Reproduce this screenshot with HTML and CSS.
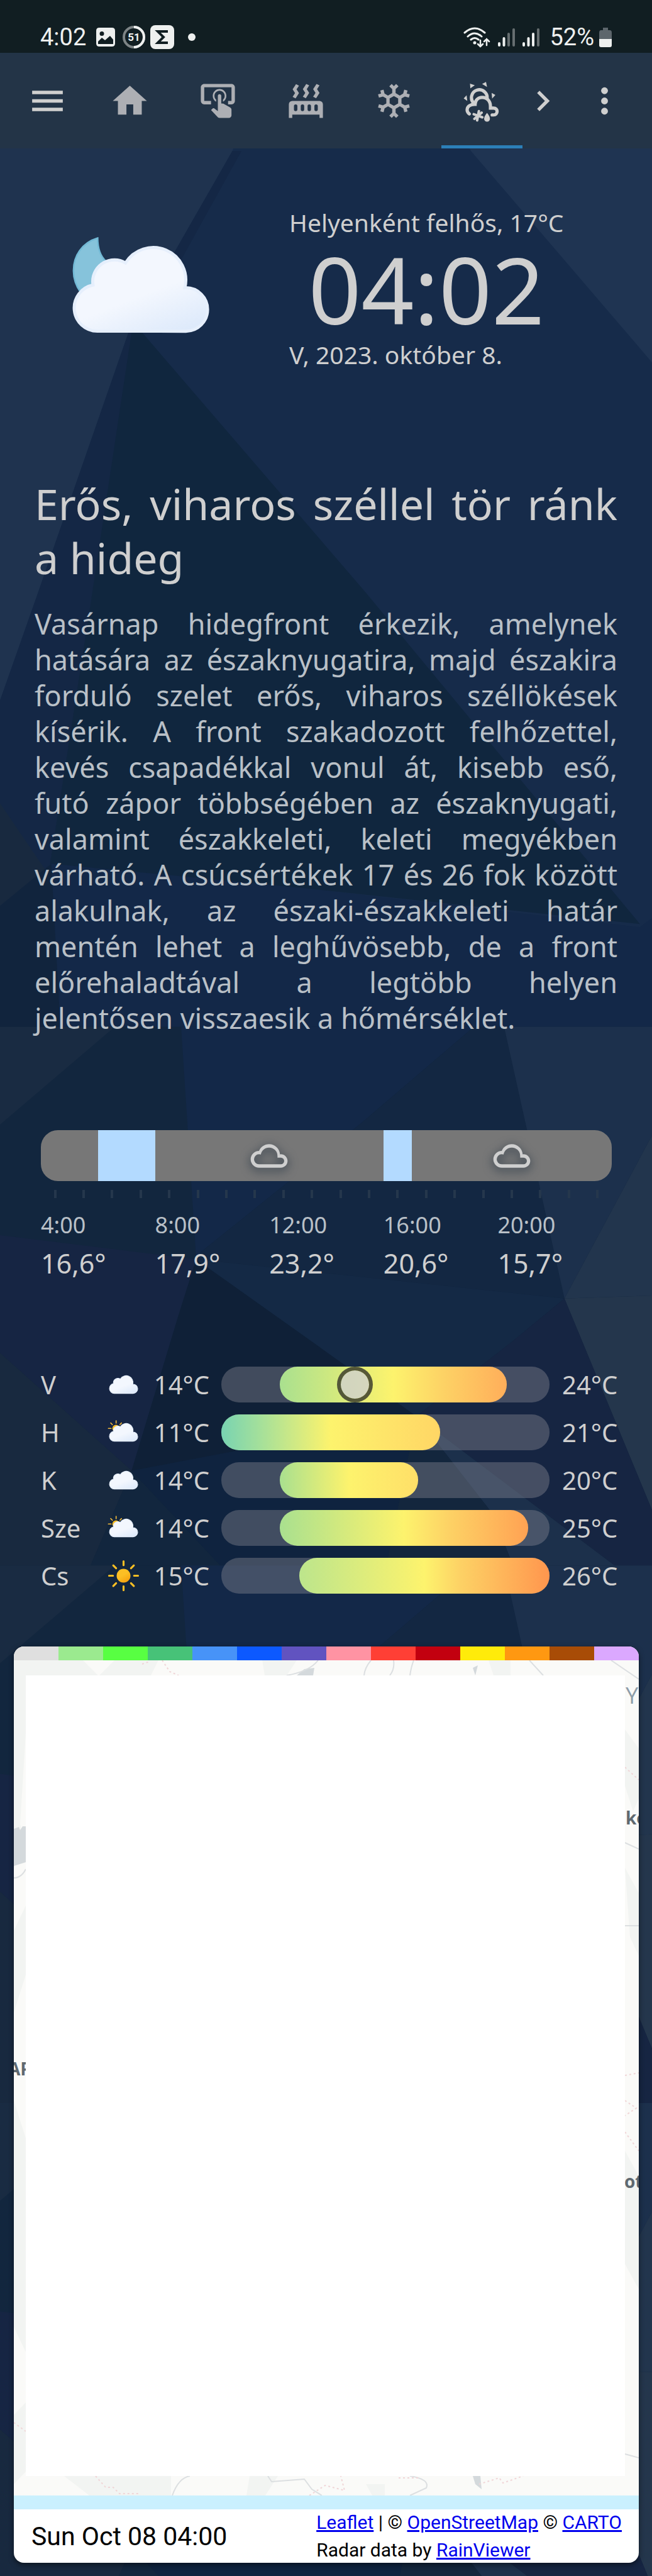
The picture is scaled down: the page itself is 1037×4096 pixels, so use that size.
FILE: index.html
```html
<!DOCTYPE html>
<html lang="hu">
<head>
<meta charset="utf-8">
<meta name="viewport" content="width=device-width, initial-scale=1">
<title>Időjárás</title>
<link rel="stylesheet" href="styles.css">
</head>
<body>
<svg class="backdrop" viewBox="0 0 1080 4265" preserveAspectRatio="none" aria-hidden="true">
  <defs>
    <g id="facets">
      <path fill="#12263e" d="M0 0H1080V892H0Z"/>
      <path fill="#192b42" d="M0 0H190L0 162Z"/>
      <path fill="#132848" d="M300 0H785L598 160L333 373L325 385L317 260Z"/>
      <path fill="#132742" d="M785 0H835L935 450L325 385L333 373L598 160Z"/>
      <path fill="#1c304c" d="M835 0H1080V180L935 450Z"/>
      <path fill="#22354d" d="M1080 180V445L935 450Z"/>
      <path fill="#24364c" d="M935 450L1080 445V800Z"/>
      <path fill="#162543" d="M0 345L325 385L295 480L218 735L0 540Z"/>
      <path fill="#18293f" d="M0 540L218 735L150 892H0Z"/>
      <path fill="#12263e" d="M218 735L365 892H150Z"/>
      <path fill="#0f233f" d="M218 735L690 645L640 892H365Z"/>
      <path fill="#0f2037" d="M325 385L515 520L690 645L218 735L295 480Z"/>
      <path fill="#142945" d="M325 385L935 450L850 520L690 645L515 520Z"/>
      <path fill="#162542" d="M935 450L1080 800V892H1018L690 645L850 520Z"/>
      <path fill="#1c304b" d="M690 645L1018 892H850L815 805Z"/>
      <path fill="#13263d" d="M690 645L815 805L850 892H640Z"/>
    </g>
  </defs>
  <path fill="#162b4a" d="M0 0H1080V1700H0Z"/>
  <path fill="#1f334f" d="M0 0H480L385 250L213 550L60 990L0 1160Z"/>
  <path fill="#142745" d="M385 250H400L300 430L220 550L150 1000L83 1430L75 1440L0 1330V1160L60 990L213 550Z"/>
  <path fill="#1f3452" d="M640 0H1080V600L780 250Z"/>
  <path fill="#132848" d="M83 1430L500 1470L1060 1535L1080 1520V1700H83Z"/>
  <path fill="#10263e" d="M218 550L235 550L605 980L1060 1530L500 1470L83 1430L150 1000Z"/>
  <path fill="#18293f" d="M0 1330L75 1440L0 1500Z"/>
  <path fill="#11243d" d="M0 1500L85 1430L100 1700H0Z"/>
  <use href="#facets" y="1700"/>
  <use href="#facets" y="2592"/>
  <use href="#facets" y="3482"/>
</svg>

<svg class="defs" aria-hidden="true">
  <defs>
    <linearGradient id="cloud-fill" x1="0.3" y1="0.2" x2="0.8" y2="1">
      <stop offset="0.45" stop-color="#f3f7fe"/><stop offset="1" stop-color="#deeafb"/>
    </linearGradient>
    <linearGradient id="sun-fill" x1="0.2" y1="0" x2="0.8" y2="1">
      <stop offset="0.45" stop-color="#fbbf24"/><stop offset="1" stop-color="#f59e0b"/>
    </linearGradient>
    <path id="cloud" fill="url(#cloud-fill)" stroke="#e6effc" stroke-width="1" d="M46.5 31.5h-.32a10.49 10.49 0 0 0-19.11-8 7 7 0 0 0-10.57 6 7.21 7.21 0 0 0 .1 1.14A7.5 7.5 0 0 0 18 45.5h28.500a7 7 0 0 0 0-14z"/>
    <symbol id="cloudy" viewBox="0 0 64 64"><use href="#cloud"/></symbol>
    <symbol id="partly" viewBox="0 0 64 64">
      <circle cx="20.500" cy="26" r="5.500" fill="url(#sun-fill)"/>
      <path stroke="#f2b93b" stroke-width="1.600" stroke-linecap="round" d="M20.700 14.500V18M9 26H13M12.500 17.800L15 20.300M28.800 17.800L26.500 20.300"/>
      <use href="#cloud"/>
    </symbol>
    <symbol id="sunny" viewBox="0 0 64 64">
      <circle cx="32" cy="32" r="10.500" fill="url(#sun-fill)"/>
      <path stroke="#fbbf24" stroke-width="3" stroke-linecap="round" d="M32 10V16M32 48V54M10 32H16M48 32H54M16.400 16.400L20.700 20.700M43.300 43.300L47.600 47.600M16.400 47.600L20.700 43.300M43.300 20.700L47.600 16.400"/>
    </symbol>
    <symbol id="cloud-line" viewBox="0 0 24 24">
      <path fill="#cfcfcf" d="M6,19A5,5 0 0,1 1,14A5,5 0 0,1 6,9C7,6.65 9.3,5 12,5C15.43,5 18.24,7.66 18.5,11.03L19,11A4,4 0 0,1 23,15A4,4 0 0,1 19,19H6M19,13H17V12A5,5 0 0,0 12,7C9.5,7 7.45,8.82 7.06,11.19C6.73,11.07 6.37,11 6,11A3,3 0 0,0 3,14A3,3 0 0,0 6,17H19A2,2 0 0,0 21,15A2,2 0 0,0 19,13Z"/>
    </symbol>
  </defs>
</svg>

<div class="status">
  <span class="status-text">4:02</span>
  <svg class="s-photo" width="30" height="30" viewBox="0 0 30 30" aria-hidden="true"><path fill="#eef0ef" fill-rule="evenodd" d="M5 0H25Q30 0 30 5V25Q30 30 25 30H5Q0 30 0 25V5Q0 0 5 0ZM9 6A3.500 3.500 0 1 0 9 13A3.500 3.500 0 1 0 9 6ZM3 22V26H27V19L22 13L14 20L9 16Z"/></svg>
  <svg class="s-ring" width="36" height="36" viewBox="0 0 36 36" aria-hidden="true"><circle cx="18" cy="18" r="16" fill="none" stroke="#7d8486" stroke-width="4"/><path d="M18 2A16 16 0 0 1 18 34" fill="none" stroke="#eef0ef" stroke-width="4"/><text x="18" y="24" text-anchor="middle" class="ring-text">51</text></svg>
  <svg class="s-sigma" width="38" height="38" viewBox="0 0 38 38" aria-hidden="true"><rect width="38" height="38" rx="8" fill="#eef0ef"/><path d="M28 10H12L21 19L12 28H28" fill="none" stroke="#111e22" stroke-width="4"/></svg>
  <i class="s-dot"></i>
  <div class="status-right">
    <svg width="43" height="33" viewBox="0 0 43 33" aria-hidden="true"><g fill="none" stroke="#eef0ef" stroke-width="3" stroke-linecap="round"><path d="M2 9Q18 -5 34 9M7 15Q18 5 29 15M12 20Q18 15 24 20"/><path stroke-width="2.500" d="M27 21V31M23 27L27 31L31 27M37 29V19M33 23L37 19L41 23"/></g><circle cx="18" cy="25" r="2.500" fill="#eef0ef"/></svg>
    <svg width="27" height="29" viewBox="0 0 27 29" aria-hidden="true"><g stroke="#eef0ef" stroke-width="4" stroke-linecap="round"><path d="M2 24V27M9.500 16V27"/><path stroke="#666e70" d="M17 9V27M25 2V27"/></g></svg>
    <svg width="27" height="29" viewBox="0 0 27 29" aria-hidden="true"><g stroke="#eef0ef" stroke-width="4" stroke-linecap="round"><path d="M2 24V27M9.500 16V27M17 9V27"/><path stroke="#666e70" d="M25 2V27"/></g></svg>
    <span class="status-text">52%</span>
    <svg width="20" height="31" viewBox="0 0 20 31" aria-hidden="true"><path fill="#5d666c" d="M6 0H14V4H17Q20 4 20 8V19H0V8Q0 4 3 4H6Z"/><path fill="#eef0ef" d="M0 18H20V28Q20 31 17 31H3Q0 31 0 28Z"/></svg>
  </div>
</div>

<header class="bar">
  <button class="icon-btn menu" aria-label="Menü"><svg class="icon" viewBox="0 0 24 24"><path d="M3,6H21V8H3V6M3,11H21V13H3V11M3,16H21V18H3V16Z"/></svg></button>
  <nav class="tabs">
    <a class="tab" href="#home" aria-label="Otthon"><svg class="icon" viewBox="0 0 24 24"><path d="M10,20V14H14V20H19V12H22L12,3L2,12H5V20H10Z"/></svg></a>
    <a class="tab" href="#switches" aria-label="Kapcsolók"><svg class="icon" viewBox="0 0 24 24"><path d="M13 5C15.21 5 17 6.79 17 9C17 10.5 16.2 11.77 15 12.46V11.24C15.61 10.69 16 9.89 16 9C16 7.34 14.66 6 13 6S10 7.34 10 9C10 9.89 10.39 10.69 11 11.24V12.46C9.8 11.77 9 10.5 9 9C9 6.79 10.79 5 13 5M20 20.5C19.97 21.32 19.32 21.97 18.5 22H13C12.62 22 12.26 21.85 12 21.57L8 17.37L8.74 16.6C8.93 16.39 9.2 16.28 9.5 16.28H9.7L12 18V9C12 8.45 12.45 8 13 8S14 8.45 14 9V13.47L15.21 13.6L19.15 15.79C19.68 16.03 20 16.56 20 17.14V20.5M20 2H4C2.9 2 2 2.9 2 4V12C2 13.11 2.9 14 4 14H8V12L4 12L4 4H20L20 12H18V14H20V13.96L20.04 14C21.13 14 22 13.09 22 12V4C22 2.9 21.11 2 20 2Z"/></svg></a>
    <a class="tab" href="#heating" aria-label="Fűtés"><svg class="icon" viewBox="0 0 24 24"><path fill-rule="evenodd" d="M7.95,3L6.53,5.19L7.95,7.4L5.95,10.5L4.22,9.6L5.64,7.39L4.22,5.19L6.22,2.09L7.95,3M13.95,2.89L12.53,5.1L13.95,7.3L11.95,10.4L10.22,9.5L11.64,7.3L10.22,5.1L12.22,2L13.95,2.89M20,2.89L18.56,5.1L20,7.3L18,10.4L16.25,9.5L17.67,7.3L16.25,5.1L18.25,2L20,2.89M2,22V14A2,2 0 0,1 4,12H20A2,2 0 0,1 22,14V22H20V20H4V22H2M6,14A1,1 0 0,0 5,15V17A1,1 0 0,0 7,17V15A1,1 0 0,0 6,14M10,14A1,1 0 0,0 9,15V17A1,1 0 0,0 11,17V15A1,1 0 0,0 10,14M14,14A1,1 0 0,0 13,15V17A1,1 0 0,0 15,17V15A1,1 0 0,0 14,14M18,14A1,1 0 0,0 17,15V17A1,1 0 0,0 19,17V15A1,1 0 0,0 18,14Z"/></svg></a>
    <a class="tab" href="#cooling" aria-label="Hűtés"><svg class="icon" viewBox="0 0 24 24"><path d="M20.79,13.95L18.46,14.57L16.46,13.44V10.56L18.46,9.43L20.79,10.05L21.31,8.12L19.54,7.65L20,5.88L18.07,5.36L17.45,7.69L15.45,8.82L13,7.38V5.12L14.71,3.41L13.29,2L12,3.29L10.71,2L9.29,3.41L11,5.12V7.38L8.5,8.82L6.5,7.69L5.92,5.36L4,5.88L4.47,7.65L2.7,8.12L3.22,10.05L5.55,9.43L7.55,10.56V13.45L5.55,14.58L3.22,13.96L2.7,15.89L4.47,16.36L4,18.12L5.93,18.64L6.55,16.31L8.55,15.18L11,16.62V18.88L9.29,20.59L10.71,22L12,20.71L13.29,22L14.7,20.59L13,18.88V16.62L15.5,15.17L17.5,16.3L18.12,18.63L20,18.12L19.53,16.35L21.3,15.88L20.79,13.95M9.5,10.56L12,9.11L14.5,10.56V13.44L12,14.89L9.5,13.44V10.56Z"/></svg></a>
    <a class="tab active" href="#weather" aria-label="Időjárás" aria-current="page"><svg class="icon" viewBox="0 0 24 24"><path d="M5 1.800L7.800 2.800L5.200 4.600ZM12.100 2L14.400 .8L15 3.800ZM17.700 7.300L19.900 8.500L18 10.600ZM3 8.700L1.300 10.500L3.400 12ZM15 19Q16.700 21 16.700 22.500A1.700 1.700 0 0 1 13.300 22.500Q13.300 21 15 19Z"/><g fill="none" stroke="currentColor" stroke-width="1.900"><path d="M7.300 13.400A4.600 4.600 0 1 1 15 10.800"/><path stroke-linecap="round" d="M4.600 19.600C3.700 19 3.300 18.200 3.300 17.300C3.300 15.100 5.200 13.900 8 14C8 11.500 9.800 9.900 12.200 9.900C14.900 9.900 17 12 17 15V16.200H18.800C20.200 16.200 20.900 17 20.900 18.100C20.900 19.500 20 20.200 19 20.200H18"/><path stroke-width="1.500" stroke-linecap="round" d="M10.200 18L9.200 23.400M7.200 19.800L12.200 21.600M11.800 18.900L7.600 22.500"/></g></svg></a>
  </nav>
  <button class="icon-btn next" aria-label="Tovább"><svg class="icon" viewBox="0 0 24 24"><path d="M8.59,16.58L13.17,12L8.59,7.41L10,6L16,12L10,18L8.59,16.58Z"/></svg></button>
  <button class="icon-btn more" aria-label="Továbbiak"><svg class="icon" viewBox="0 0 24 24"><circle cx="12" cy="6" r="2"/><circle cx="12" cy="12" r="2"/><circle cx="12" cy="18" r="2"/></svg></button>
</header>

<main>
  <section class="now">
    <svg class="now-icon" viewBox="0 0 64 64" aria-hidden="true">
      <path fill="#86c3db" stroke="#72b9d5" stroke-width="0.500" d="M18.100 15.500C13 17 10.300 21.300 10.300 26C10.300 28.800 11.200 31 12.600 33L24 32L20.800 23C18.900 21.300 18.100 18.500 18.100 15.500Z"/>
      <use href="#cloud"/>
    </svg>
    <div class="now-text">
      <p class="cond">Helyenként felhős, 17°C</p>
      <time class="clock">04:02</time>
      <p class="cond">V, 2023. október 8.</p>
    </div>
  </section>

  <article class="report">
    <h1>Erős, viharos széllel tör ránk a hideg</h1>
    <p>Vasárnap hidegfront érkezik, amelynek hatására az északnyugatira, majd északira forduló szelet erős, viharos széllökések kísérik. A front szakadozott felhőzettel, kevés csapadékkal vonul át, kisebb eső, futó zápor többségében az északnyugati, valamint északkeleti, keleti megyékben várható. A csúcsértékek 17 és 26 fok között alakulnak, az északi-északkeleti határ mentén lehet a leghűvösebb, de a front előrehaladtával a legtöbb helyen jelentősen&nbsp;visszaesik a hőmérséklet.</p>
  </article>

  <section class="hourly">
    <div class="hour-bar">
      <span class="seg gray f2"></span><span class="seg blue f2"></span><span class="seg gray f8"><svg class="seg-icon"><use href="#cloud-line"/></svg></span><span class="seg blue f1"></span><span class="seg gray f7"><svg class="seg-icon"><use href="#cloud-line"/></svg></span>
    </div>
    <div class="ticks"><i></i><i></i><i></i><i></i><i></i><i></i><i></i><i></i><i></i><i></i><i></i><i></i><i></i><i></i><i></i><i></i><i></i><i></i><i></i><i></i></div>
    <ul class="hours">
      <li><time>4:00</time><b>16,6°</b></li>
      <li><time>8:00</time><b>17,9°</b></li>
      <li><time>12:00</time><b>23,2°</b></li>
      <li><time>16:00</time><b>20,6°</b></li>
      <li><time>20:00</time><b>15,7°</b></li>
    </ul>
  </section>

  <section class="daily">
    <div class="day"><span>V</span><svg class="day-icon"><use href="#cloudy"/></svg><span class="min">14°C</span><div class="track"><div class="range" style="left:17.9%;right:13.1%;background:linear-gradient(90deg,#a9e08f,#fdf36d 50%,#fdd265 72%,#ffae5a)"></div><i class="marker" style="left:40.6%"></i></div><span>24°C</span></div>
    <div class="day"><span>H</span><svg class="day-icon"><use href="#partly"/></svg><span class="min">11°C</span><div class="track"><div class="range" style="left:0;right:33.4%;background:linear-gradient(90deg,#78d3b2,#a5e09a 18%,#fdf36d 50%,#ffd665)"></div></div><span>21°C</span></div>
    <div class="day"><span>K</span><svg class="day-icon"><use href="#cloudy"/></svg><span class="min">14°C</span><div class="track"><div class="range" style="left:17.9%;right:40%;background:linear-gradient(90deg,#a9e08f,#fdf36d 50%,#ffdf68)"></div></div><span>20°C</span></div>
    <div class="day"><span>Sze</span><svg class="day-icon"><use href="#partly"/></svg><span class="min">14°C</span><div class="track"><div class="range" style="left:17.9%;right:6.6%;background:linear-gradient(90deg,#a9e08f,#fdf36d 50%,#fdd265 68%,#ffa253)"></div></div><span>25°C</span></div>
    <div class="day"><span>Cs</span><svg class="day-icon"><use href="#sunny"/></svg><span class="min">15°C</span><div class="track"><div class="range" style="left:23.7%;right:0;background:linear-gradient(90deg,#bce58c,#fdf36d 50%,#fdd265 64%,#ff964e)"></div></div><span>26°C</span></div>
  </section>

  <section class="radar">
    <div class="legend"><i class="c1"></i><i class="c2"></i><i class="c3"></i><i class="c4"></i><i class="c5"></i><i class="c6"></i><i class="c7"></i><i class="c8"></i><i class="c9"></i><i class="c10"></i><i class="c11"></i><i class="c12"></i><i class="c13"></i><i class="c14"></i></div>
    <div class="map">
      <svg class="map-base" viewBox="0 0 994 1328" preserveAspectRatio="none" aria-hidden="true">
        <g fill="#f2f4f2"><path d="M0 0H110L140 30H20V100L10 260L19 300L0 330ZM160 0H230L215 30H130ZM395 0H450L430 30H400ZM755 0H790V30H765ZM972 110L994 140V220L985 240L972 200ZM972 330L994 370V470L980 440ZM0 430L19 390V500L0 560ZM0 700L19 760V1100L0 1060ZM972 780L994 820V1000L972 960ZM80 1297H250V1328H120ZM375 1297H420L400 1328H370ZM560 1310H590V1328H570ZM0 1200L19 1180V1290L0 1310Z"/></g>
        <g fill="#d4d9dc"><path d="M0 268L8 265L10 270L14 264H19V321L0 327ZM462 14L478 12L476 24H450ZM730 12L738 8L734 24ZM730 1297H742L744 1318L734 1310Z"/></g>
        <g fill="none" stroke="#dcdfe1" stroke-width="2"><path d="M568 0Q558 12 557 24M604 0Q606 14 598 24M636 0Q632 10 630 24M434 24Q470 18 484 0M820 0L842 24M950 0L994 30M0 346Q12 346 19 332M972 422H994M972 290L994 300M252 1328Q262 1300 280 1297M404 1297L410 1306L462 1302L474 1318L490 1328M630 1297Q662 1302 656 1316L630 1328M972 1262L994 1268"/></g>
        <g fill="none" stroke="#f0d6d8" stroke-width="2" stroke-dasharray="3 4"><path d="M236 0L248 18L262 24M204 6L216 2M972 170L994 190M972 660L994 656M972 700L990 712L972 724M972 750L994 780M130 1297L146 1315L158 1315L168 1325L198 1325M470 1328L495 1312L526 1320L520 1297M612 1300L644 1300M740 1310L772 1300L778 1308L810 1297M0 1212L19 1226"/></g>
        <text class="map-big" x="973" y="69">Y</text>
        <text class="map-label" x="973" y="261">ko</text>
        <text class="map-label" x="971" y="839">ot</text>
        <text class="map-label" x="-9" y="660">AP</text>
      </svg>
      <div class="map-blank"></div>
    </div>
    <div class="progress"></div>
    <footer class="radar-foot">
      <time>Sun Oct 08 04:00</time>
      <p><a href="#leaflet">Leaflet</a> | © <a href="#osm">OpenStreetMap</a> © <a href="#carto">CARTO</a><br>Radar data by <a href="#rainviewer">RainViewer</a></p>
    </footer>
  </section>
</main>
</body>
</html>
```
FILE: styles.css
```css
* { box-sizing: border-box; }
body {
  margin: 0;
  position: relative;
  background: #12263e;
  color: #cfcfcf;
  font-family: "Noto Sans", "Open Sans", sans-serif;
  font-weight: 400;
}
h1, p, ul { margin: 0; padding: 0; font-weight: inherit; }
b { font-weight: inherit; }
.backdrop { position: absolute; inset: 0; width: 100%; height: 100%; z-index: -1; }
.defs { position: absolute; width: 0; height: 0; }

.status {
  display: flex;
  align-items: center;
  height: 84px;
  padding: 34px 64px 0;
  background: #111e22;
  color: #eef0ef;
}
.status-text { font: 400 38px/44px Roboto, sans-serif; }
.ring-text { font: 700 17px Roboto, sans-serif; fill: #eef0ef; }
.s-photo { margin-left: 16px; }
.s-ring { margin-left: 12px; }
.s-sigma { margin-left: 8px; }
.s-dot { width: 12px; height: 12px; margin-left: 22px; border-radius: 50%; background: #eef0ef; }
.status-right { display: flex; align-items: center; gap: 12px; margin-left: auto; }
.status-right .status-text { margin: 0 -4px 0 4px; }

.bar { display: flex; align-items: stretch; height: 152px; background: #233447; }
.icon { width: 65px; height: 65px; display: block; fill: currentColor; overflow: visible; }
.icon-btn { display: flex; align-items: center; justify-content: center; padding: 0; border: 0; background: none; color: #cfcfcf; }
.menu { width: 97px; margin: 0 0 0 27px; }
.tabs { display: flex; gap: 11px; margin-left: 18px; }
.tab { display: flex; align-items: center; justify-content: center; width: 129px; border-bottom: 5px solid transparent; border-top: 5px solid transparent; color: #adafb4; }
.tab.active { color: #cfcfcf; border-bottom-color: #2c7fb8; }
.next { width: 65px; }
.more { width: 97px; margin: 0 27px 0 auto; }

.now { display: flex; padding: 66px 66px 0; }
.now-icon { width: 316px; height: 316px; }
.now-text { display: flex; flex-direction: column; margin-left: 78px; padding-top: 24px; }
.cond { font-size: 39px; line-height: 56px; }
.clock { font-size: 147px; line-height: 154px; align-self: center; }

.report { padding: 140px 55px 0; text-align: justify; }
.report h1 { font-size: 68px; line-height: 86px; }
.report p { margin-top: 33px; font-size: 45px; line-height: 57px; color: #b9c0c7; }

.hourly { padding: 150px 64px 0 65px; }
.hour-bar { display: flex; height: 81px; border-radius: 27px; overflow: hidden; }
.seg { display: flex; align-items: center; justify-content: center; }
.gray { background: #777; }
.blue { background: #b3daff; }
.f1 { flex: 1; } .f2 { flex: 2; } .f7 { flex: 7; } .f8 { flex: 8; }
.seg-icon { width: 64px; height: 64px; overflow: visible; filter: drop-shadow(0 4px 8px #203040); }
.ticks { display: flex; justify-content: space-around; margin-top: 14px; }
.ticks i { width: 4px; height: 13px; background: #25374c; }
.hours { display: flex; list-style: none; margin-top: 18px; }
.hours li { flex: 1; display: flex; flex-direction: column; }
.hours time { font-size: 36px; line-height: 50px; color: #b9c0c7; }
.hours b { font-size: 43px; line-height: 72px; }

.daily { display: flex; flex-direction: column; gap: 19px; padding: 128px 55px 0 65px; }
.day { display: grid; grid-template-columns: 98px 67px 103px 1fr 88px; grid-template-rows: 57px; align-items: center; font-size: 40px; line-height: 57px; white-space: nowrap; }
.day-icon { width: 67px; height: 67px; margin: -5px 0; }
.min { text-align: right; }
.track { position: relative; height: 57px; margin: 0 20px 0 19px; border-radius: 28px; background: rgba(140, 140, 150, 0.4); }
.range { position: absolute; top: 0; bottom: 0; border-radius: 28px; }
.marker { position: absolute; top: 0; width: 57px; height: 57px; margin-left: -28px; border: 6px solid rgba(50, 50, 40, 0.8); border-radius: 50%; background: rgba(207, 207, 207, 0.8); background-clip: padding-box; }

.radar { margin: 84px 21px 21px 22px; border-radius: 16px; overflow: hidden; background: #fff; color: #000; font-family: Roboto, sans-serif; font-weight: 400; box-shadow: 0 3px 8px rgba(0, 0, 0, 0.5); }
.legend { display: flex; height: 22px; }
.legend i { flex: 1; }
.c1 { background: #dfdfdf; } .c2 { background: #9bea8f; } .c3 { background: #58ff42; } .c4 { background: #47c278; }
.c5 { background: #4793f8; } .c6 { background: #0c59ff; } .c7 { background: #6153c0; } .c8 { background: #ff93a3; }
.c9 { background: #ff3f35; } .c10 { background: #c2000f; } .c11 { background: #ffeb0a; } .c12 { background: #ff9811; }
.c13 { background: #a84c06; } .c14 { background: #dba8ff; }
.map { position: relative; padding: 24px 22px 31px 19px; background: #fafaf8; }
.map-base { position: absolute; inset: 0; width: 100%; height: 100%; }
.map-blank { position: relative; height: 1273px; background: #fff; }
.map-big { font: 400 36px "Open Sans", sans-serif; fill: #8e9da8; }
.map-label { font: 700 28px "Open Sans", sans-serif; fill: #5f6970; }
.progress { height: 22px; background: #caf0fe; }
.radar-foot { display: flex; justify-content: space-between; align-items: center; height: 85px; padding: 0 27px 0 28px; }
.radar-foot time { font-size: 41px; line-height: 48px; }
.radar-foot p { font-size: 30px; line-height: 44px; white-space: nowrap; }
.radar-foot a { color: #00e; }
```
